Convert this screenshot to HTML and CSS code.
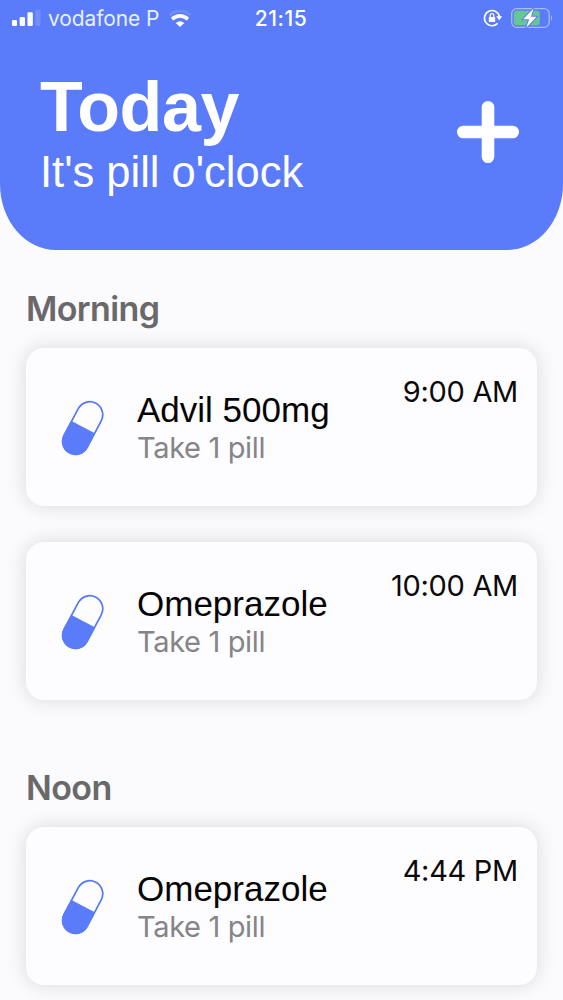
FILE: index.html
```html
<!DOCTYPE html>
<html lang="en">
<head>
<title>Today</title>

<meta charset="utf-8">
<meta name="viewport" content="width=device-width, initial-scale=1">

<link rel="stylesheet" href="styles.css">
</head>

<body>
  <!-- shared pill icon -->
  <svg class="defs" width="0" height="0">
    <symbol id="pill" viewBox="0 0 44 56">
      <g transform="translate(21.7 28) rotate(28)">
        <rect x="-13" y="-28" width="26" height="56" rx="13" fill="none" stroke="#5478f6" stroke-width="1.7"/>
        <path d="M-13.7-1h27.4v16.2a13.7 13.7 0 0 1-27.4 0z" fill="#5b7cfa"/>
      </g>
    </symbol>
  </svg>

  <header class="header">
    <div class="status">
      <div class="status-left">
        <svg class="signal" width="30" height="16" viewBox="0 0 30 16" fill="#fff">
          <rect x="0" y="10" width="5" height="6" rx="1.3"/>
          <rect x="7.7" y="7" width="5.3" height="9" rx="1.3"/>
          <rect x="15.5" y="2.3" width="5.3" height="13.7" rx="1.3"/>
          <rect x="23.3" y="0" width="5.3" height="16" rx="1.3" opacity=".14"/>
        </svg>
        <span class="carrier">vodafone P</span>
        <svg class="wifi" width="24" height="18" viewBox="0 0 24 18" fill="none" stroke="#fff">
          <path d="M1.5 5Q12-3.2 22.5 5" stroke-width="3" opacity=".12"/>
          <path d="M4 9.2Q12 2.6 20 9.2" stroke-width="3.6"/>
          <path d="M12 17L7.7 13Q12 9.5 16.3 13z" fill="#fff" stroke="none"/>
        </svg>
      </div>
      <span class="clock">21:15</span>
      <div class="status-right">
        <svg class="lock" width="20" height="18" viewBox="0 0 20 18">
          <path d="M14.6 14.4A7.6 7.6 0 1 1 16.6 8" fill="none" stroke="#fff" stroke-width="1.6"/>
          <path d="M13.2 7.3h6l-3 3.9z" fill="#fff"/>
          <rect x="5.8" y="8" width="6.4" height="5" rx=".8" fill="#fff"/>
          <path d="M7.2 8.2V6.6a1.8 2 0 0 1 3.6 0v1.6" fill="none" stroke="#fff" stroke-width="1.2"/>
        </svg>
        <svg class="battery" width="42" height="22" viewBox="0 0 42 22">
          <rect x=".7" y="1.7" width="37.5" height="18.6" rx="5" fill="none" stroke="#a9bbfb" stroke-width="1.3"/>
          <path d="M40 8q2 3 0 6z" fill="#a9bbfb"/>
          <rect x="2.8" y="3.8" width="26" height="14.4" rx="3" fill="#66c795"/>
          <path d="M22.7 1.2L12.2 12.3h6L15.2 20.8 25.6 9.7h-5.7z" fill="#fff" stroke="#5b7cfa" stroke-width="2" paint-order="stroke"/>
        </svg>
      </div>
    </div>

    <div class="header-main">
      <div>
        <h1 class="title">Today</h1>
        <p class="subtitle">It's pill o'clock</p>
      </div>
      <svg class="add" width="62" height="62" viewBox="0 0 62 62" stroke="#fff" stroke-width="12.6" stroke-linecap="round">
        <path d="M31 6.3v49.4M6.3 31h49.4"/>
      </svg>
    </div>
  </header>

  <main class="schedule">
    <section class="period">
      <h2 class="period-name">Morning</h2>
      <div class="card">
        <svg class="pill"><use href="#pill"/></svg>
        <div class="info">
          <div class="name">Advil 500mg</div>
          <div class="dose">Take 1 pill</div>
        </div>
        <div class="time">9:00 AM</div>
      </div>
      <div class="card">
        <svg class="pill"><use href="#pill"/></svg>
        <div class="info">
          <div class="name">Omeprazole</div>
          <div class="dose">Take 1 pill</div>
        </div>
        <div class="time">10:00 AM</div>
      </div>
    </section>

    <section class="period">
      <h2 class="period-name">Noon</h2>
      <div class="card">
        <svg class="pill"><use href="#pill"/></svg>
        <div class="info">
          <div class="name">Omeprazole</div>
          <div class="dose">Take 1 pill</div>
        </div>
        <div class="time">4:44 PM</div>
      </div>
    </section>
  </main>
</body>

</html>
```
FILE: styles.css
```css
* {
  box-sizing: border-box;
}
html {
  height: 100%;
  overflow: hidden;
}
body {
  margin: 0;
  height: 100%;
  overflow: hidden;
  background-color: #fbfafc;
  font-family: Inter, "Liberation Sans", sans-serif;
}
h1, h2, p {
  margin: 0;
}
svg {
  display: block;
  flex: none;
}
.defs {
  display: none;
}

.header {
  height: 250px;
  background-color: #5b7cfa;
  border-radius: 0 0 56px 56px / 0 0 66px 66px;
  color: #fff;
}
.status {
  display: grid;
  grid-template-columns: 1fr auto 1fr;
  align-items: center;
  height: 36px;
  padding: 0 10px 0 12px;
}
.status-left, .status-right {
  display: flex;
  align-items: center;
}
.status-right {
  justify-content: flex-end;
  gap: 8px;
}
.carrier {
  margin-left: 6px;
  font-size: 21px;
  letter-spacing: -.1px;
  color: #e6f0ff;
}
.wifi {
  margin-top: 2px;
  margin-left: 9px;
}
.clock {
  margin-right: 3px;
  font-size: 21px;
  font-weight: 500;
  letter-spacing: .6px;
}
.header-main {
  display: flex;
  justify-content: space-between;
  padding: 36px 44px 0 40px;
}
.title {
  font: bold 70px/70px "Liberation Sans", sans-serif;
  letter-spacing: -.4px;
}
.subtitle {
  font: 43.5px/61px "Liberation Sans", sans-serif;
  white-space: nowrap;
}
.add {
  margin-top: 29px;
}

.schedule {
  padding: 37px 26px 0;
}
.period + .period {
  margin-top: 66px;
}
.period-name {
  height: 61px;
  font-size: 34px;
  font-weight: 600;
  line-height: 44px;
  letter-spacing: -.6px;
  color: #69696b;
}
.card {
  display: flex;
  height: 158px;
  padding-left: 35px;
  padding-right: 19px;
  background-color: #fdfcfe;
  border-radius: 18px;
  box-shadow: 0 0 20px rgba(0, 0, 0, .14);
}
.card + .card {
  margin-top: 35.6px;
}
.pill {
  width: 44px;
  height: 56px;
  margin-top: 52px;
  overflow: visible;
}
.info {
  flex: 1;
  padding: 42px 0 0 32px;
}
.name {
  font: 35px/40px "Liberation Sans", sans-serif;
  color: #050505;
}
.dose {
  font-size: 29px;
  line-height: 36px;
  letter-spacing: -.35px;
  color: #858587;
}
.time {
  padding-top: 26px;
  font-size: 29px;
  line-height: 36px;
  letter-spacing: -.3px;
  color: #0a0a0a;
}
```
